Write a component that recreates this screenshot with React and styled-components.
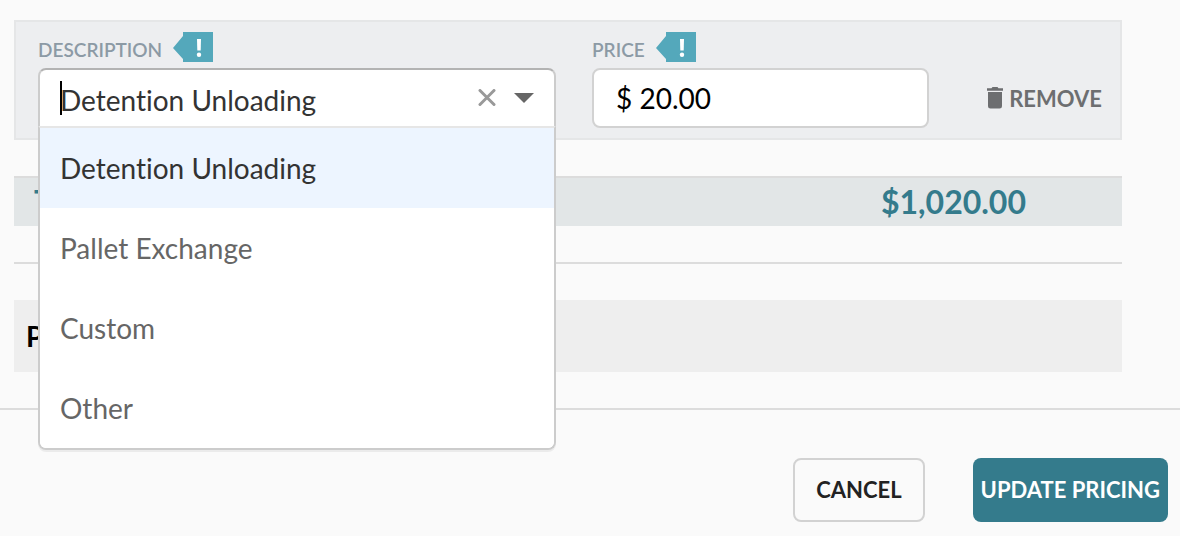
import React, {useState} from 'react';
import styled, {createGlobalStyle} from 'styled-components';

const GlobalStyle = createGlobalStyle`
  * {
    box-sizing: border-box;
  }

  body {
    margin: 0;
    background-color: #fafafa;
    font-family: Lato, sans-serif;
    font-variant-ligatures: none;
  }

  button,
  input {
    font-family: inherit;
    font-variant-ligatures: none;
  }
`;

const Page = styled.main`
  padding-top: 20px;
`;

const Content = styled.div`
  display: flex;
  flex-direction: column;
  gap: 36px;
  padding: 0 58px 36px 14px;
`;

const ChargePanel = styled.section`
  display: grid;
  grid-template-columns: minmax(0, 518fr) minmax(0, 337fr) minmax(120px, 137fr);
  gap: 36px;
  padding: 10px 18px 10px 22px;
  border: 2px solid #e5e6e7;
  background-color: #edeef0;
`;

const Field = styled.div`
  display: flex;
  flex-direction: column;
  gap: 6px;
`;

const LabelRow = styled.div`
  display: flex;
  align-items: center;
  gap: 11px;
  height: 30px;
`;

const Label = styled.label`
  padding-top: 6px;
  color: #8c9aa5;
  font-size: 19px;
  font-weight: 600;
  line-height: 24px;
`;

const Select = styled.div`
  position: relative;
`;

const Control = styled.div`
  display: flex;
  align-items: center;
  height: 60px;
  padding: 0 20px;
  border: 2px solid #ccc;
  border-top-color: #b3b3b3;
  border-radius: 8px 8px 0 0;
  background-color: #fff;
`;

const Caret = styled.span`
  width: 2px;
  height: 34px;
  margin-right: -2px;
  background-color: #000;
`;

const SelectInput = styled.input`
  flex: 1;
  min-width: 0;
  height: 56px;
  padding: 4px 0 0;
  border: 0;
  outline: 0;
  background: transparent;
  color: #333;
  font-size: 28px;
`;

const IconButton = styled.button`
  display: flex;
  margin-left: 18px;
  padding: 0;
  border: 0;
  background: none;
  cursor: pointer;
`;

const Menu = styled.ul`
  position: absolute;
  top: calc(100% - 2px);
  left: 0;
  right: 0;
  z-index: 1;
  margin: 0;
  padding: 0;
  border: 2px solid #ccc;
  border-top-color: #e6e6e6;
  border-radius: 0 0 8px 8px;
  background-color: #fff;
  box-shadow: 0 2px 0 rgba(0, 0, 0, 0.06);
  list-style: none;
  overflow: hidden;
`;

const Option = styled.li`
  padding: 22px 20px;
  background-color: ${props => props.$active ? '#edf5ff' : '#fff'};
  color: ${props => props.$active ? '#333' : '#666'};
  font-size: 28px;
  line-height: 36px;
  cursor: pointer;
`;

const PriceInput = styled.input`
  width: 100%;
  height: 60px;
  padding: 0 22px;
  border: 2px solid #d2d2d2;
  border-radius: 8px;
  background-color: #fff;
  color: #000;
  font-size: 28px;
`;

const RemoveButton = styled.button`
  display: flex;
  align-items: center;
  align-self: end;
  justify-self: end;
  gap: 6px;
  height: 60px;
  padding: 0;
  border: 0;
  background: none;
  color: #6d6e70;
  font-size: 22px;
  font-weight: 700;
  cursor: pointer;
`;

const Total = styled.div`
  display: flex;
  align-items: center;
  justify-content: space-between;
  padding: 0 96px 0 20px;
  border-top: 2px solid #dcdcdc;
  background-color: #e2e6e7;
  color: #347b8c;
  font-size: 32px;
  font-weight: 700;
  line-height: 48px;
`;

const Divider = styled.hr`
  width: 100%;
  margin: 0;
  border: 0;
  border-top: 2px solid #dcdcdc;
`;

const SectionTitle = styled.h2`
  margin: 0;
  padding: 0 12px;
  background-color: #eee;
  color: #000;
  font-size: 28px;
  font-weight: 700;
  line-height: 72px;
`;

const Footer = styled.footer`
  display: flex;
  justify-content: flex-end;
  gap: 48px;
  padding: 48px 12px 14px;
  border-top: 2px solid #dcdcdc;
`;

const Button = styled.button`
  height: 64px;
  padding: 0 ${props => props.$primary ? '8px' : '21px'} 2px;
  border: ${props => props.$primary ? '0' : '2px solid #d2d2d2'};
  border-radius: 8px;
  background-color: ${props => props.$primary ? '#347b8c' : '#fafafa'};
  color: ${props => props.$primary ? '#fff' : '#222'};
  font-size: 22px;
  font-weight: 700;
  cursor: pointer;
`;

const RequiredFlag = () => (
    <svg width="40" height="30" viewBox="0 0 40 30" role="img" aria-label="Required">
        <path d="M10 0h30v30H10v-3L0 16l10-12z" fill="#54a8bb"/>
        <path d="M24 7h4l-.3 11.5h-3.4z" fill="#fff"/>
        <circle cx="26" cy="22.8" r="2.2" fill="#fff"/>
    </svg>
);

const ClearIcon = () => (
    <svg width="18" height="18" viewBox="0 0 18 18" aria-hidden="true">
        <path d="M2 1.5l14 14M16 1.5l-14 14" stroke="#999" strokeWidth="3" strokeLinecap="round"/>
    </svg>
);

const ArrowIcon = () => (
    <svg width="20" height="10" viewBox="0 0 20 10" aria-hidden="true">
        <path d="M0 0h20L10 10z" fill="#666"/>
    </svg>
);

const TrashIcon = () => (
    <svg width="16" height="22" viewBox="0 0 16 22" aria-hidden="true">
        <path d="M0 1.2h4.5L5.5 0h5l1 1.2H16v2.6H0z" fill="currentColor"/>
        <path d="M1 5h14v14.2a2.4 2.4 0 0 1-2.4 2.4H3.4A2.4 2.4 0 0 1 1 19.2z" fill="currentColor"/>
    </svg>
);

const OPTIONS = ['Detention Unloading', 'Pallet Exchange', 'Custom', 'Other'];

export default function App() {
    const [description, setDescription] = useState(OPTIONS[0]);
    const [price, setPrice] = useState('$ 20.00');

    return (
        <Page>
            <GlobalStyle/>
            <Content>
                <ChargePanel>
                    <Field>
                        <LabelRow>
                            <Label htmlFor="description">DESCRIPTION</Label>
                            <RequiredFlag/>
                        </LabelRow>
                        <Select>
                            <Control>
                                <Caret/>
                                <SelectInput
                                    id="description"
                                    role="combobox"
                                    aria-expanded="true"
                                    aria-controls="description-options"
                                    value={description}
                                    onChange={e => setDescription(e.target.value)}
                                />
                                <IconButton type="button" aria-label="Clear" onClick={() => setDescription('')}>
                                    <ClearIcon/>
                                </IconButton>
                                <IconButton type="button" aria-label="Toggle options">
                                    <ArrowIcon/>
                                </IconButton>
                            </Control>
                            <Menu id="description-options" role="listbox">
                                {OPTIONS.map(option => (
                                    <Option
                                        key={option}
                                        role="option"
                                        aria-selected={option === description}
                                        $active={option === description}
                                        onClick={() => setDescription(option)}
                                    >
                                        {option}
                                    </Option>
                                ))}
                            </Menu>
                        </Select>
                    </Field>
                    <Field>
                        <LabelRow>
                            <Label htmlFor="price">PRICE</Label>
                            <RequiredFlag/>
                        </LabelRow>
                        <PriceInput id="price" value={price} onChange={e => setPrice(e.target.value)}/>
                    </Field>
                    <RemoveButton type="button">
                        <TrashIcon/>
                        REMOVE
                    </RemoveButton>
                </ChargePanel>
                <Total>
                    <span>Total</span>
                    <span>$1,020.00</span>
                </Total>
                <Divider/>
                <SectionTitle>Pricing</SectionTitle>
            </Content>
            <Footer>
                <Button type="button">CANCEL</Button>
                <Button type="button" $primary>UPDATE PRICING</Button>
            </Footer>
        </Page>
    );
}
